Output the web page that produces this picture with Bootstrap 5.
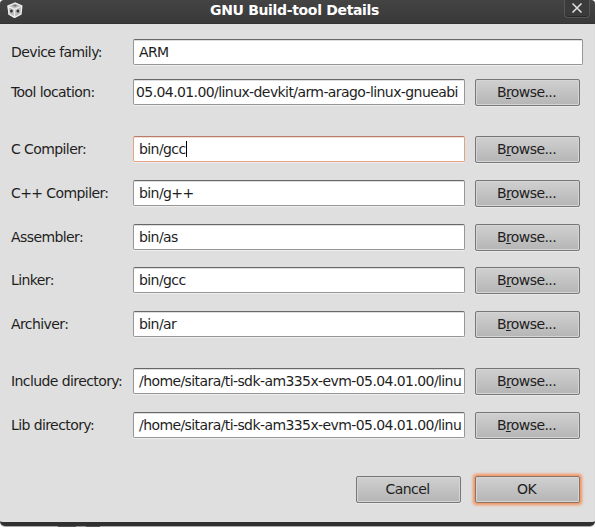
<!DOCTYPE html>
<html lang="en">
<head>
<meta charset="utf-8">
<title>GNU Build-tool Details</title>
<link href="https://cdn.jsdelivr.net/npm/bootstrap@5.3.0/dist/css/bootstrap.min.css" rel="stylesheet">
<style>
body{font-family:"DejaVu Sans",sans-serif;font-size:14px;letter-spacing:-.59px;line-height:18px;color:#1e1e1e;background:#fff;width:596px;height:529px;overflow:hidden}
.dialog-win{width:595px;height:526px;background:#dfdfdf;border-bottom:4px solid #303030;border-radius:4px 4px 5px 5px;box-shadow:0 1px 0 #aaa;overflow:hidden}
.title-bar{height:24px;background:linear-gradient(#444,#393939);color:#fff;font-weight:700;border-bottom:1px solid #333}
.title-text{margin-left:187px;line-height:20px;letter-spacing:-.33px}
.app-icon{width:16px;height:16px;margin:2px 0 0 7px}
.close-box{width:26px;height:18px;margin-right:5px;border:1px solid #565656;border-top:0;border-radius:0 0 4px 4px;background:#3b3b3b;box-shadow:inset 0 -1px #292929}
.form-area{padding:15px 12px 0 11px}
.field-row{height:27px;margin-bottom:17px}
.row-first{margin-bottom:13px}
.row-tool{margin-bottom:30px}
.row-assembler{margin-bottom:16px}
.row-archiver{margin-bottom:30px}
.row-lib{margin-bottom:37px}
.lbl{width:122px;line-height:26px;white-space:nowrap}
.form-control.field{width:332px;height:26px;font-size:14px;line-height:18px;padding:3px 2px 3px 5px;color:#1e1e1e;border:1px solid #969696;border-top-color:#686868;border-radius:2px;background:#fff;box-shadow:inset 0 1px #ddd,0 1px #eee;white-space:nowrap;flex:none}
.form-control.field-wide{width:450px}
.form-control.field-scrolled{padding-left:2px}
.form-control.field-focus{border-color:#e1a384;border-top-color:#b77d69;box-shadow:inset 0 1px #f3ded4,0 1px #eee}
.field-text{display:block;height:18px}
.btn.push{width:105px;height:27px;margin-left:10px;padding:0 2px 1px 0;font-size:14px;letter-spacing:-.57px;line-height:23px;color:#1e1e1e;border:1px solid #777;border-radius:2px;background:linear-gradient(#d0d0d0,#b5b5b5);box-shadow:inset 0 0 0 1px #d5d5d5,0 1px #eaeaea}
.btn.push-default{margin-left:14px;border-color:#8a7467;box-shadow:inset 0 0 0 1px #d5d5d5,0 0 3px 1.5px #f3925c}
.actions{padding-right:3px}
.caret{display:inline-block;width:1px;height:16px;background:#000;vertical-align:-3px}
.desk-edge{height:1px;width:42px;margin-left:58px;position:relative;background:linear-gradient(90deg,#555 0 18px,#999 18px 28px,#555 28px)}
</style>
</head>
<body>
<div class="dialog-win">
<header class="title-bar d-flex align-items-start">
<svg class="app-icon" viewBox="0 0 16 16"><path d="M8 .8 15 4 14 12.4 7.5 15.8 1.5 12.4.5 4Z" fill="#bbb"/><path d="M.8 4 7.5 7.3 14.8 4M7.5 7.3v8M8 1 1 4l1 8 5.5 3.5 6.5-3.3.8-8.2Z" stroke="#eee" stroke-width="1.3" fill="none"/><path d="m8 2.4 2.4 1L8 4.7 5.5 3.5Z" fill="#777"/><ellipse cx="4.4" cy="9" rx="1.4" ry="1.6" fill="#333"/><ellipse cx="10.9" cy="9" rx="1.4" ry="1.6" fill="#333"/></svg>
<span class="title-text">GNU Build-tool Details</span>
<span class="close-box ms-auto d-flex justify-content-center"><svg width="12" height="16" viewBox="0 0 12 16"><path d="m1.5 3.5 9 9m0-9-9 9" stroke="#ddd" stroke-width="1.6"/></svg></span>
</header>
<main class="form-area">
<div class="field-row row-first d-flex align-items-start"><label class="lbl">Device family:</label><div class="form-control field field-wide"><span class="field-text">ARM</span></div></div>
<div class="field-row row-tool d-flex align-items-start"><label class="lbl">Tool location:</label><div class="form-control field field-scrolled"><span class="field-text">05.04.01.00/linux-devkit/arm-arago-linux-gnueabi</span></div><button class="btn push">B<u>r</u>owse...</button></div>
<div class="field-row d-flex align-items-start"><label class="lbl">C Compiler:</label><div class="form-control field field-focus"><span class="field-text">bin/gcc<i class="caret"></i></span></div><button class="btn push">B<u>r</u>owse...</button></div>
<div class="field-row d-flex align-items-start"><label class="lbl">C++ Compiler:</label><div class="form-control field"><span class="field-text">bin/g++</span></div><button class="btn push">B<u>r</u>owse...</button></div>
<div class="field-row row-assembler d-flex align-items-start"><label class="lbl">Assembler:</label><div class="form-control field"><span class="field-text">bin/as</span></div><button class="btn push">B<u>r</u>owse...</button></div>
<div class="field-row d-flex align-items-start"><label class="lbl">Linker:</label><div class="form-control field"><span class="field-text">bin/gcc</span></div><button class="btn push">B<u>r</u>owse...</button></div>
<div class="field-row row-archiver d-flex align-items-start"><label class="lbl">Archiver:</label><div class="form-control field"><span class="field-text">bin/ar</span></div><button class="btn push">B<u>r</u>owse...</button></div>
<div class="field-row d-flex align-items-start"><label class="lbl">Include directory:</label><div class="form-control field"><span class="field-text">/home/sitara/ti-sdk-am335x-evm-05.04.01.00/linu</span></div><button class="btn push">B<u>r</u>owse...</button></div>
<div class="field-row row-lib d-flex align-items-start"><label class="lbl">Lib directory:</label><div class="form-control field"><span class="field-text">/home/sitara/ti-sdk-am335x-evm-05.04.01.00/linu</span></div><button class="btn push">B<u>r</u>owse...</button></div>
<div class="actions d-flex justify-content-end"><button class="btn push">Cancel</button><button class="btn push push-default">OK</button></div>
</main>
</div>
<div class="desk-edge"></div>
<script src="https://cdn.jsdelivr.net/npm/bootstrap@5.3.0/dist/js/bootstrap.bundle.min.js"></script>
</body>
</html>
